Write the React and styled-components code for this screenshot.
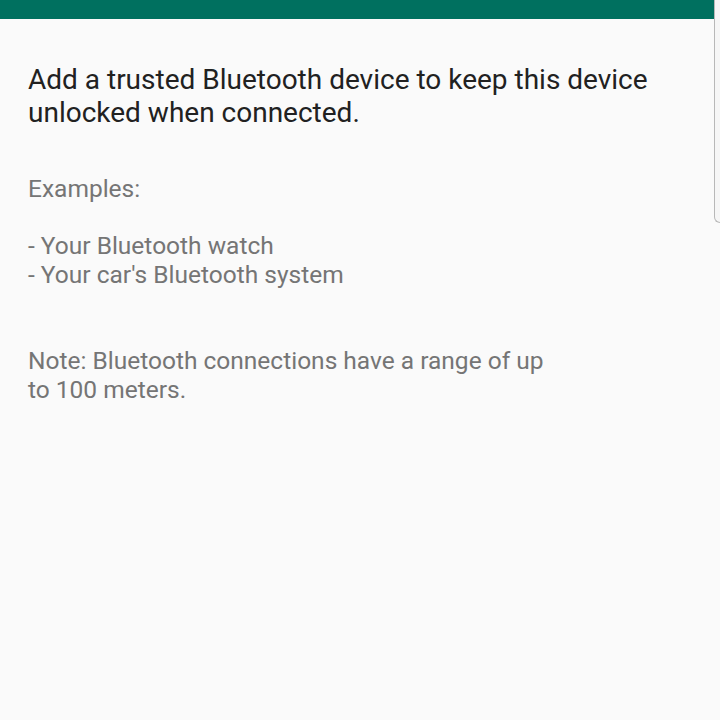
import React from "react";
import styled, { createGlobalStyle } from "styled-components";

const Global = createGlobalStyle`
  html, body { margin: 0; padding: 0; background: #fafafa; }
  body { font-family: Roboto, "Noto Sans", sans-serif; }
`;

const Screen = styled.div`
  position: relative;
  width: 720px;
  height: 720px;
  background: #fafafa;
  overflow: hidden;
`;

const TopBar = styled.div`
  height: 19px;
  width: 714px;
  background: #00705f;
`;

const EdgeHandle = styled.div`
  position: absolute;
  top: -10px;
  right: -4px;
  width: 9px;
  height: 232px;
  border-left: 1px solid #b8b8b8;
  border-bottom: 1px solid #b8b8b8;
  border-bottom-left-radius: 6px;
  background: #f6f6f6;
`;

const Content = styled.div`
  display: flex;
  flex-direction: column;
  padding: 44px 28px 0 28px;
`;

const Heading = styled.p`
  margin: 0;
  font-size: 28px;
  line-height: 33px;
  color: #212121;
  font-weight: 400;
`;

const Body = styled.p`
  margin: ${(p) => p.$top}px 0 0 0;
  font-size: 24.5px;
  line-height: 28.7px;
  color: #757575;
  max-width: ${(p) => p.$max || 660}px;
`;

export default function App() {
  return (
    <Screen>
      <Global />
      <TopBar />
      <EdgeHandle />
      <Content>
        <Heading>
          Add a trusted Bluetooth device to keep this device unlocked when
          connected.
        </Heading>
        <Body $top={46}>
          Examples:
          <br />
          <br />
          - Your Bluetooth watch
          <br />
          - Your car's Bluetooth system
        </Body>
        <Body $top={57} $max={560}>
          Note: Bluetooth connections have a range of up
          <br />
          to 100 meters.
        </Body>
      </Content>
    </Screen>
  );
}
